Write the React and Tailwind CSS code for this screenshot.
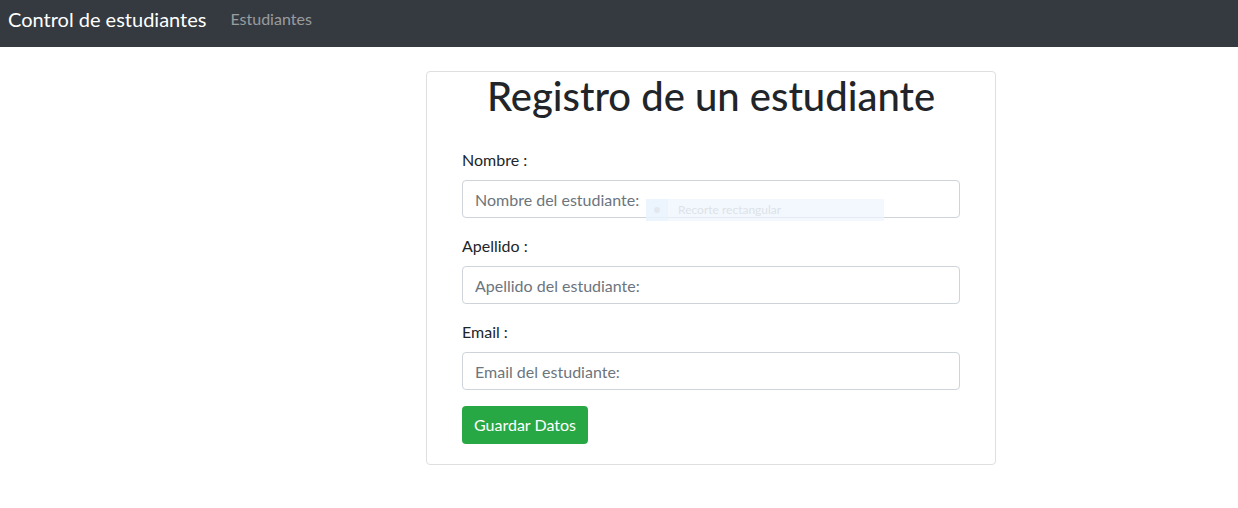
export default function App() {
  const font = { fontFamily: 'Lato, "Noto Sans", sans-serif' };
  return (
    <div className="min-h-[508px] bg-white text-[#212529]" style={font}>
      <nav className="h-[47px] bg-[#343a40] flex items-start px-2 pt-[4px]">
        <span className="text-[20px] leading-[30px] text-white mr-4">Control de estudiantes</span>
        <span className="px-2 text-[16px] leading-[30px] text-white/50">Estudiantes</span>
      </nav>
      <div className="flex pt-6 pl-[426px]">
        <div className="w-[570px] border border-[#dfdfdf] rounded">
          <h1 className="text-center text-[40px] leading-[48px] font-medium mb-2">Registro de un estudiante</h1>
          <div className="px-[35px] pt-5 pb-5">
            <div className="mb-4">
              <label className="block text-[16px] leading-6 mb-2">Nombre :</label>
              <div className="relative">
                <input
                  className="w-full h-[38px] border border-[#ced4da] rounded px-3 text-[16px] placeholder:text-[#6c757d] outline-none"
                  placeholder="Nombre del estudiante:"
                />
                <div className="absolute left-[184px] top-[19px] w-[238px] h-[22px] flex items-center bg-[#eef5fd]/70">
                  <div className="w-[22px] h-full bg-[#e8f1fb]/60 flex items-center justify-center">
                    <span className="w-[6px] h-[6px] rounded-full bg-[#e3e8ee]"></span>
                  </div>
                  <span className="ml-[10px] text-[12px] text-[#dde2e8]">Recorte rectangular</span>
                </div>
              </div>
            </div>
            <div className="mb-4">
              <label className="block text-[16px] leading-6 mb-2">Apellido :</label>
              <input
                className="w-full h-[38px] border border-[#ced4da] rounded px-3 text-[16px] placeholder:text-[#6c757d] outline-none"
                placeholder="Apellido del estudiante:"
              />
            </div>
            <div className="mb-4">
              <label className="block text-[16px] leading-6 mb-2">Email :</label>
              <input
                className="w-full h-[38px] border border-[#ced4da] rounded px-3 text-[16px] placeholder:text-[#6c757d] outline-none"
                placeholder="Email del estudiante:"
              />
            </div>
            <button className="h-[38px] px-3 bg-[#28a745] text-white text-[16px] rounded">Guardar Datos</button>
          </div>
        </div>
      </div>
    </div>
  );
}
